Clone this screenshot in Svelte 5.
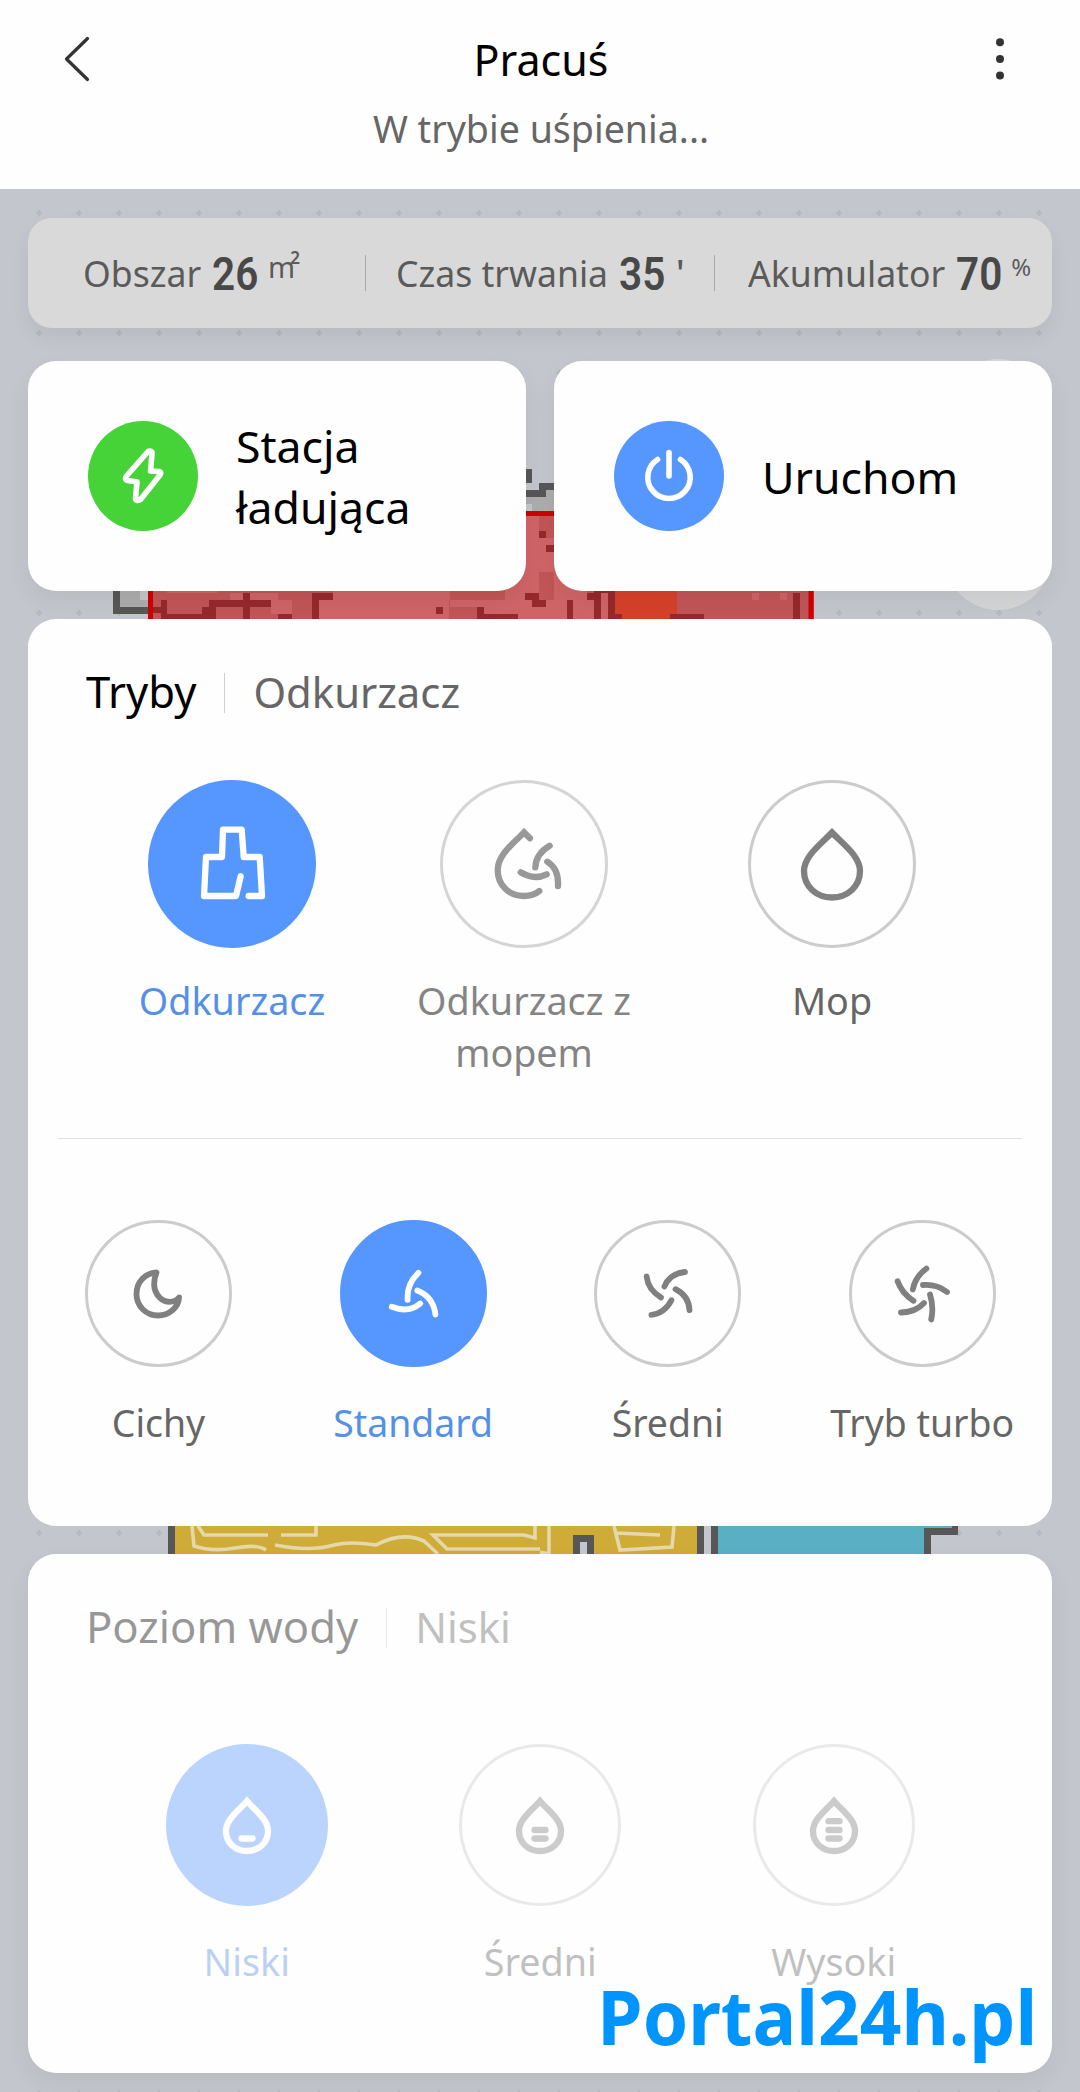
<script>
    const cleanModes = [
        { label: 'Odkurzacz', icon: 'brush', active: true },
        { label: 'Odkurzacz z mopem', icon: 'combo', dimmed: true },
        { label: 'Mop', icon: 'drop' }
    ];

    const fanModes = [
        { label: 'Cichy', icon: 'moon' },
        { label: 'Standard', icon: 'fan3', active: true },
        { label: 'Średni', icon: 'fan4' },
        { label: 'Tryb turbo', icon: 'fan5' }
    ];

    const waterLevels = [
        { label: 'Niski', icon: 'water1', active: true },
        { label: 'Średni', icon: 'water2' },
        { label: 'Wysoki', icon: 'water3' }
    ];

    const waterDrop = 'M0 -24C-9 -13.5 -21 -5.5 -21 6C-21 18 -11.5 26 0 26C11.5 26 21 18 21 6C21 -5.5 9 -13.5 0 -24Z';

    // All icons are drawn around 0,0
    const icons = {
        brush: 'M8.7 12.3L4 32H-28L-26 -7H-10L-9 -34.3H9.7L11.7 -7H27.7L30 32H16.7',
        combo: 'M6 -25.7L0 -31.7C-10 -21 -26.3 -9.5 -26.3 6C-26.3 22 -14 32 0 32C6 32 11 30.5 15.3 27M25.7 -18.3Q12 -10.5 11.3 3.3M-3.3 8.3Q10 16.5 22.7 10.3M23.3 -2.3Q35 5 34 22',
        drop: 'M0 -31.5C-11 -20 -28 -8 -28 7C-28 23 -15 33.5 0 33.5C15 33.5 28 23 28 7C28 -8 11 -20 0 -31.5Z',
        moon: 'M-1.5 -21.5C-13 -21 -21.5 -12 -21.5 0C-21.5 12 -12 21.5 0 21.5C11 21.5 20.5 13.5 21 3.5C16 9.5 7 9 2 4C-4 -2 -5.5 -11 -1.5 -21.5Z',
        fan3: 'M5.4 -21.2Q-6.5 -10 -5.4 5.8M-21.3 12.8Q-4.6 19.5 7.2 9.5M4.3 -3.5Q20.5 3 22.4 20.5',
        fan4: 'M-21.4 -17.5Q-20 -4.5 -7 3.5M17 -22Q1.5 -20.5 -3.6 -7.5M7.5 -4.8Q21 2 21.5 16.2M3.4 6.2Q-3 19 -16.6 20.8',
        fan5: 'M-24.4 -12.8Q-20.3 -1 -8.5 6.8M4.4 -25.5Q-7 -17 -9.2 -4.5M1 -9Q15 -10 25 -2M8 .5Q12 13 9.2 25.5M2 9Q-6 18 -21 18.5',
        water1: waterDrop + 'M-5.5 13.5H5.5',
        water2: waterDrop + 'M-5.5 13.5H5.5M-5.5 5H5.5',
        water3: waterDrop + 'M-5.5 13.5H5.5M-5.5 5H5.5M-5.5 -3.8H5.5'
    };

    // x, y, width, height of the obstacles on the map
    const obstacles = [
        [539, 531, 7, 7], [546, 545, 8, 7], [525, 593, 14, 7], [532, 600, 14, 7],
        [161, 600, 6, 17], [148, 607, 13, 6], [161, 614, 55, 5], [202, 607, 14, 12],
        [209, 600, 62, 7], [243, 593, 7, 26], [278, 614, 14, 5], [312, 593, 21, 7],
        [312, 593, 7, 26], [436, 607, 7, 7], [477, 607, 7, 12], [477, 614, 41, 5],
        [587, 593, 8, 7], [594, 591, 7, 28], [567, 600, 6, 19], [594, 591, 21, 2],
        [608, 591, 7, 28], [608, 614, 14, 5], [670, 614, 34, 5], [793, 593, 7, 26]
    ];

    const lightPatches = [
        [167, 591, 50, 2], [230, 593, 13, 7], [250, 593, 28, 7], [271, 600, 21, 14], [319, 600, 130, 19],
        [333, 591, 117, 9], [450, 600, 57, 7], [484, 600, 48, 14], [505, 516, 34, 103],
        [539, 538, 15, 34], [539, 600, 28, 19], [554, 572, 33, 28], [573, 600, 21, 19],
        [601, 593, 7, 26], [752, 593, 7, 7], [780, 593, 7, 7]
    ];
</script>

{#snippet option(item, size)}
    <div class="option" class:active={item.active} class:dimmed={item.dimmed}>
        <div class="ring {size}">
            <svg class="icon" class:thin={size === 'small'} width="84" height="84" viewBox="-42 -42 84 84">
                <path d={icons[item.icon]} />
            </svg>
        </div>
        <span class="option-label">{item.label}</span>
    </div>
{/snippet}

<div class="screen">
    <svg class="map" width="1080" height="2092" viewBox="0 0 1080 2092">
        <defs>
            <pattern id="dots" x="19" y="193" width="40" height="40" patternUnits="userSpaceOnUse">
                <path d="M20 17V23M17 20H23" stroke="#b6babf" stroke-width="2.5" />
            </pattern>
        </defs>
        <rect width="1080" height="2092" fill="#c3c7cd" />
        <rect x="30" y="193" width="1020" height="1899" fill="url(#dots)" />

        <circle cx="998" cy="412" r="53" fill="#d5d6d7" />
        <circle cx="998" cy="557" r="53" fill="#d5d6d7" />

        <path d="M120 580H148V610H120Z M520 490H560V511H520Z" fill="#adadad" />
        <path d="M140 580H148V600H140Z M526 504H532V511H526Z" fill="#c4c6c9" />
        <path d="M113 580H120V607H148V614H113Z M520 469H532V483H520Z M539 483H560V490H546V497H520V490H539Z" fill="#575757" />

        <rect x="148" y="511" width="666" height="130" fill="#c15557" />
        {#each lightPatches as [x, y, width, height]}
            <rect {x} {y} {width} {height} fill="#cf6467" />
        {/each}
        <rect x="615" y="580" width="62" height="45" fill="#d6412a" />
        {#each obstacles as [x, y, width, height]}
            <rect {x} {y} {width} {height} fill="#95292c" />
        {/each}
        <rect x="150.5" y="513.5" width="660.5" height="130" fill="none" stroke="#d00000" stroke-width="5" />

        <rect x="168" y="1500" width="7" height="80" fill="#575757" />
        <rect x="175" y="1500" width="522" height="80" fill="#cfab37" />
        <g class="track">
            <path d="M192 1526L194 1546Q212 1552 235 1548T266 1550" />
            <path d="M198 1526L204 1535H268M281 1535H316V1526" />
            <path d="M275 1545Q310 1552 334 1545Q350 1541 376 1545Q402 1531 424 1541L438 1554" />
            <path d="M540 1549H447L433 1535H524L535 1538V1526" />
            <path d="M540 1552L549 1554V1526M614 1526L620 1550L672 1547L674 1526M616 1533L660 1535" />
        </g>
        <path d="M573 1560V1535H594V1560H587V1542H580V1560Z M697 1500H704V1580H697Z M711 1500H718V1580H711Z" fill="#575757" />
        <path d="M580 1542H587V1560H580Z M704 1500H711V1580H704Z" fill="#c4c8ce" />
        <path d="M718 1500H952V1528H924V1580H718Z" fill="#5aafc2" />
        <path d="M952 1500H958V1535H931V1580H924V1528H952Z" fill="#575757" />
    </svg>

    <header>
        <svg width="50" height="60" viewBox="50 30 50 60">
            <path d="M87.5 38.5L66.5 59L87.5 79.5" fill="none" stroke="#333" stroke-width="3.2" stroke-linecap="round" stroke-linejoin="round" />
        </svg>
        <div class="titles">
            <h1>Pracuś</h1>
            <p>W trybie uśpienia...</p>
        </div>
        <svg width="50" height="60" viewBox="970 30 50 60">
            <g fill="#333">
                <circle cx="1000" cy="42.3" r="4" />
                <circle cx="1000" cy="59" r="4" />
                <circle cx="1000" cy="75.5" r="4" />
            </g>
        </svg>
    </header>

    <main>
        <section class="stats">
            <div class="stat area">Obszar<b>26</b><span class="unit">m<sup>2</sup></span></div>
            <div class="stat time">Czas trwania<b>35</b><span class="unit minute">'</span></div>
            <div class="stat battery">Akumulator<b>70</b><span class="unit percent">%</span></div>
        </section>

        <section class="actions">
            <button class="card action">
                <svg width="110" height="110" viewBox="-55 -55 110 110">
                    <circle r="55" fill="#45d338" />
                    <path class="action-icon" d="M5 -24.5Q9.5 -26 9 -22L7.5 -5L16 -4.5Q19 -3.5 17 -1L-2.5 23.5Q-7.5 26 -7.5 22L-6 6L-15.5 4.5Q-19 3.5 -16.5 0Z" />
                </svg>
                <span>Stacja ładująca</span>
            </button>
            <button class="card action">
                <svg width="110" height="110" viewBox="-55 -55 110 110">
                    <circle r="55" fill="#5596ff" />
                    <path class="action-icon" d="M-11.5 -16.5A21.2 21.2 0 1 0 11.5 -16.5M0 -23.5V0" />
                </svg>
                <span>Uruchom</span>
            </button>
        </section>

        <section class="card modes">
            <div class="card-title">
                <h2>Tryby</h2>
                <span class="current">Odkurzacz</span>
            </div>
            <div class="row clean">
                {#each cleanModes as item}
                    {@render option(item, 'large')}
                {/each}
            </div>
            <hr />
            <div class="row fan">
                {#each fanModes as item}
                    {@render option(item, 'small')}
                {/each}
            </div>
        </section>

        <section class="card water">
            <div class="card-title">
                <h2>Poziom wody</h2>
                <span class="current">Niski</span>
            </div>
            <div class="row levels">
                {#each waterLevels as item}
                    {@render option(item, 'medium')}
                {/each}
            </div>
            <div class="watermark">Portal24h.pl</div>
        </section>
    </main>
</div>

<style>
    :global(body) {
        margin: 0;
        background: #c3c7cd;
    }

    .screen {
        position: relative;
        width: 1080px;
        height: 2092px;
        overflow: hidden;
        font-family: "Noto Sans", "Open Sans", sans-serif;
        color: #666;
    }

    .map {
        position: absolute;
        top: 0;
        left: 0;
    }

    .track {
        fill: none;
        stroke: #e5d8ab;
        stroke-width: 3.6px;
    }

    header {
        position: relative;
        box-sizing: border-box;
        height: 189px;
        padding: 30px 60px 0 50px;
        display: flex;
        justify-content: space-between;
        background: #fefefe;
    }

    .titles {
        text-align: center;
        margin-left: 12px;
    }

    h1 {
        margin: 0;
        font-size: 43px;
        font-weight: 400;
        line-height: 60px;
        color: #000;
    }

    header p {
        margin: 11px 0 0;
        font-size: 37.6px;
        line-height: 56px;
    }

    main {
        position: relative;
        padding: 29px 28px 0;
    }

    .stats {
        display: flex;
        height: 110px;
        border-radius: 24px;
        background: #d9d9d9;
        box-shadow: 0 10px 20px rgba(0, 0, 0, 0.06);
        font-size: 35.6px;
        color: #5a5a5a;
    }

    .stat {
        box-sizing: border-box;
        display: flex;
        align-items: center;
        white-space: nowrap;
    }

    .area {
        width: 338px;
        padding-left: 55px;
    }

    .time {
        width: 349px;
        padding-left: 30px;
    }

    .battery {
        padding-left: 33px;
    }

    .time::before,
    .battery::before {
        content: "";
        width: 1px;
        height: 36px;
        margin-left: -31px;
        margin-right: 30px;
        background: #a8a8a8;
    }

    .battery::before {
        margin-left: -34px;
        margin-right: 33px;
    }

    .stat b {
        width: 46px;
        margin-left: 11px;
        margin-top: 2px;
        font-family: Roboto, sans-serif;
        font-size: 46px;
        font-weight: 600;
        color: #484848;
        transform: scaleX(0.88);
        transform-origin: left;
    }

    .unit {
        margin-left: 10px;
        margin-top: -14px;
        font-size: 29px;
    }

    .unit sup {
        margin-left: -5px;
        font-size: 17px;
        font-weight: 600;
        line-height: 0;
        vertical-align: 14px;
    }

    .unit.minute {
        margin-left: 11px;
        margin-top: -2px;
        font-size: 36px;
        font-weight: 500;
    }

    .unit.percent {
        margin-left: 9px;
        font-size: 24px;
    }

    .card {
        box-sizing: border-box;
        border-radius: 28px;
        background: #fefefe;
        box-shadow: 0 10px 24px rgba(0, 0, 0, 0.06);
    }

    .actions {
        display: flex;
        gap: 28px;
        margin-top: 33px;
    }

    .action {
        display: flex;
        align-items: center;
        gap: 38px;
        width: 498px;
        height: 230px;
        padding: 0 60px;
        border: 0;
        font: inherit;
        font-size: 44.6px;
        line-height: 61px;
        text-align: left;
        color: #000;
    }

    .action svg {
        flex: none;
    }

    .action-icon {
        fill: none;
        stroke: #fff;
        stroke-width: 5.6px;
        stroke-linecap: round;
        stroke-linejoin: round;
    }

    .card.modes {
        height: 907px;
        margin-top: 28px;
        padding-top: 42px;
        box-shadow: none;
    }

    .card-title {
        display: flex;
        align-items: center;
        height: 60px;
        padding-left: 58px;
    }

    h2 {
        margin: 0;
        font-size: 43.6px;
        font-weight: 400;
        color: #000;
    }

    .current {
        margin-left: 28px;
        font-size: 41.8px;
    }

    .current::before {
        content: "";
        display: inline-block;
        width: 1px;
        height: 40px;
        margin-right: 28px;
        vertical-align: -5px;
        background: #d0d0d0;
    }

    .row {
        display: grid;
    }

    .clean {
        grid-template-columns: 284px 300px 316px;
        height: 358px;
        margin-top: 59px;
        padding-left: 62px;
    }

    .fan {
        grid-template-columns: repeat(4, 254.6px);
        padding-left: 3.2px;
    }

    .levels {
        grid-template-columns: repeat(3, 293.5px);
        margin-top: 88px;
        padding-left: 72px;
    }

    .option {
        display: flex;
        flex-direction: column;
        align-items: center;
        text-align: center;
    }

    .ring {
        box-sizing: border-box;
        display: flex;
        align-items: center;
        justify-content: center;
        border: 3px solid #ccc;
        border-radius: 50%;
    }

    .ring.large {
        width: 168px;
        height: 168px;
    }

    .ring.medium {
        width: 162px;
        height: 162px;
    }

    .ring.small {
        width: 147px;
        height: 147px;
    }

    .icon {
        fill: none;
        stroke: #808080;
        stroke-width: 6.3px;
        stroke-linecap: round;
    }

    .icon.thin {
        stroke-width: 5.8px;
        stroke-linejoin: round;
    }

    .option-label {
        max-width: 240px;
        margin-top: 27px;
        font-size: 37.7px;
        line-height: 52px;
    }

    .fan .option-label {
        margin-top: 30px;
        font-size: 37.4px;
        white-space: nowrap;
    }

    .levels .option-label {
        margin-top: 30px;
    }

    .active .ring {
        border-color: #5596ff;
        background: #5596ff;
    }

    .active .icon {
        stroke: #fff;
        stroke-linejoin: round;
    }

    .active .option-label {
        color: #5590e6;
    }

    .dimmed {
        opacity: 0.8;
    }

    hr {
        height: 1px;
        margin: 0 30px 81px;
        border: 0;
        background: #e2e2e2;
    }

    .water {
        position: relative;
        height: 519px;
        margin-top: 28px;
        padding-top: 42px;
    }

    .water .card-title,
    .water .row {
        opacity: 0.4;
    }

    .water .icon {
        stroke-linejoin: miter;
    }

    .watermark {
        position: absolute;
        right: 15px;
        bottom: 11px;
        font-size: 76px;
        font-weight: 700;
        line-height: 92px;
        white-space: nowrap;
        color: #0094ff;
        transform: scaleX(0.96);
        transform-origin: right;
    }
</style>
